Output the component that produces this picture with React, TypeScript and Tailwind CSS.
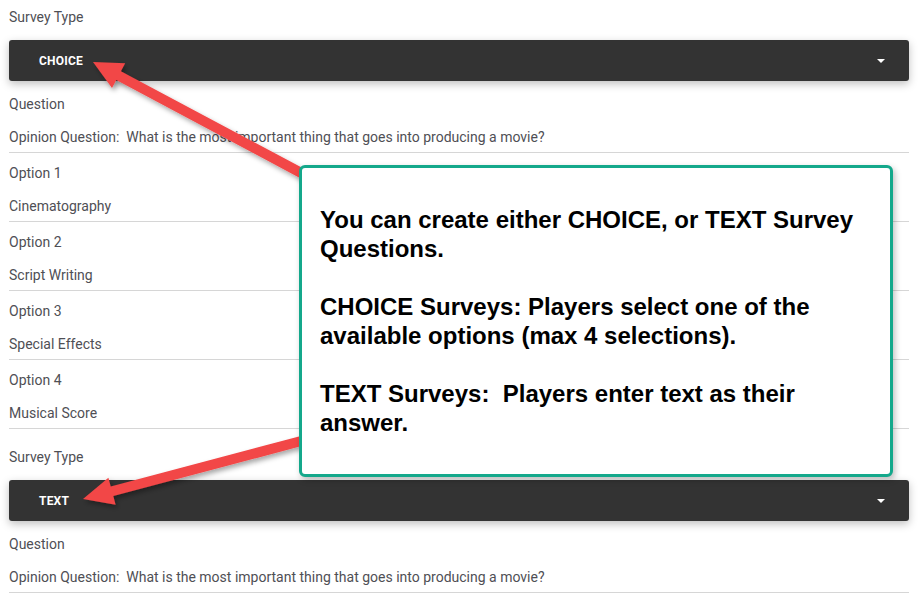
import React from "react";

const rows = [
  { label: "Option 1", value: "Cinematography" },
  { label: "Option 2", value: "Script Writing" },
  { label: "Option 3", value: "Special Effects" },
  { label: "Option 4", value: "Musical Score" },
];

const question =
  "Opinion Question:  What is the most important thing that goes into producing a movie?";

function Caret() {
  return (
    <svg width="8" height="4" viewBox="0 0 8 4" className="mr-[24px]">
      <path d="M0 0 L8 0 L4 4 Z" fill="#ffffff" />
    </svg>
  );
}

function TypeSelect({ value }: { value: string }) {
  return (
    <div className="mt-[13px] flex h-[41px] items-center justify-between rounded-[3px] bg-[#333333] pl-[30px] shadow-[0_3px_8px_rgba(0,0,0,0.25)]">
      <span className="text-[12px] font-bold tracking-[0.2px] text-white">{value}</span>
      <Caret />
    </div>
  );
}

function Field({ label, value, top }: { label: string; value: string; top?: boolean }) {
  return (
    <div className={`border-b border-[#d6d6d6] pb-[5px] ${top ? "pt-[13px]" : "pt-[10px]"}`}>
      <div className="h-[20px] leading-[20px]">{label}</div>
      <div className="mt-[13px] h-[20px] leading-[20px] whitespace-pre">{value}</div>
    </div>
  );
}

function Section({ type, first }: { type: string; first?: boolean }) {
  return (
    <div>
      <div className={first ? "pt-[7px]" : "pt-[18px]"}>
        <div className="h-[20px] leading-[20px]">Survey Type</div>
        <TypeSelect value={type} />
      </div>
      <Field label="Question" value={question} top />
    </div>
  );
}

function Arrows() {
  return (
    <svg
      className="pointer-events-none absolute inset-0"
      width="921"
      height="610"
      viewBox="0 0 921 610"
    >
      <defs>
        <filter id="sh" x="-20%" y="-20%" width="140%" height="140%">
          <feDropShadow dx="2" dy="3" stdDeviation="2.5" floodColor="#000" floodOpacity="0.35" />
        </filter>
      </defs>
      <polygon
        filter="url(#sh)"
        fill="#f24646"
        points="93,62 125.2,63.2 120.9,71.2 307.3,170.6 302.7,179.4 116.3,80 112,88"
      />
      <polygon
        filter="url(#sh)"
        fill="#f24646"
        points="83,499 108.4,477.8 110.7,486.5 303.7,435.2 306.3,444.8 113.3,496.1 115.6,504.8"
      />
    </svg>
  );
}

function Callout() {
  return (
    <div className="absolute left-[299px] top-[165px] h-[312px] w-[594px] rounded-[6px] border-[3px] border-[#14a88b] bg-white pl-[18px] pr-[18px] pt-[37px] shadow-[2px_3px_6px_rgba(0,0,0,0.25)]">
      <div className="whitespace-pre-wrap text-[24px] font-bold leading-[29px] tracking-normal text-black [font-family:'Liberation_Sans',Arial,sans-serif]">
        <p className="mb-[29px]">You can create either CHOICE, or TEXT Survey Questions.</p>
        <p className="mb-[29px]">
          CHOICE Surveys: Players select one of the available options (max 4 selections).
        </p>
        <p>TEXT Surveys:  Players enter text as their answer.</p>
      </div>
    </div>
  );
}

export default function App() {
  return (
    <div className="relative h-[610px] w-[921px] overflow-hidden bg-white text-[14px] text-[#4f4f55] [font-family:Roboto,'Liberation_Sans',sans-serif]">
      <div className="w-[909px] pl-[9px]">
        <Section type="CHOICE" first />
        {rows.map((r) => (
          <Field key={r.label} label={r.label} value={r.value} />
        ))}
        <Section type="TEXT" />
      </div>
      <Arrows />
      <Callout />
    </div>
  );
}
